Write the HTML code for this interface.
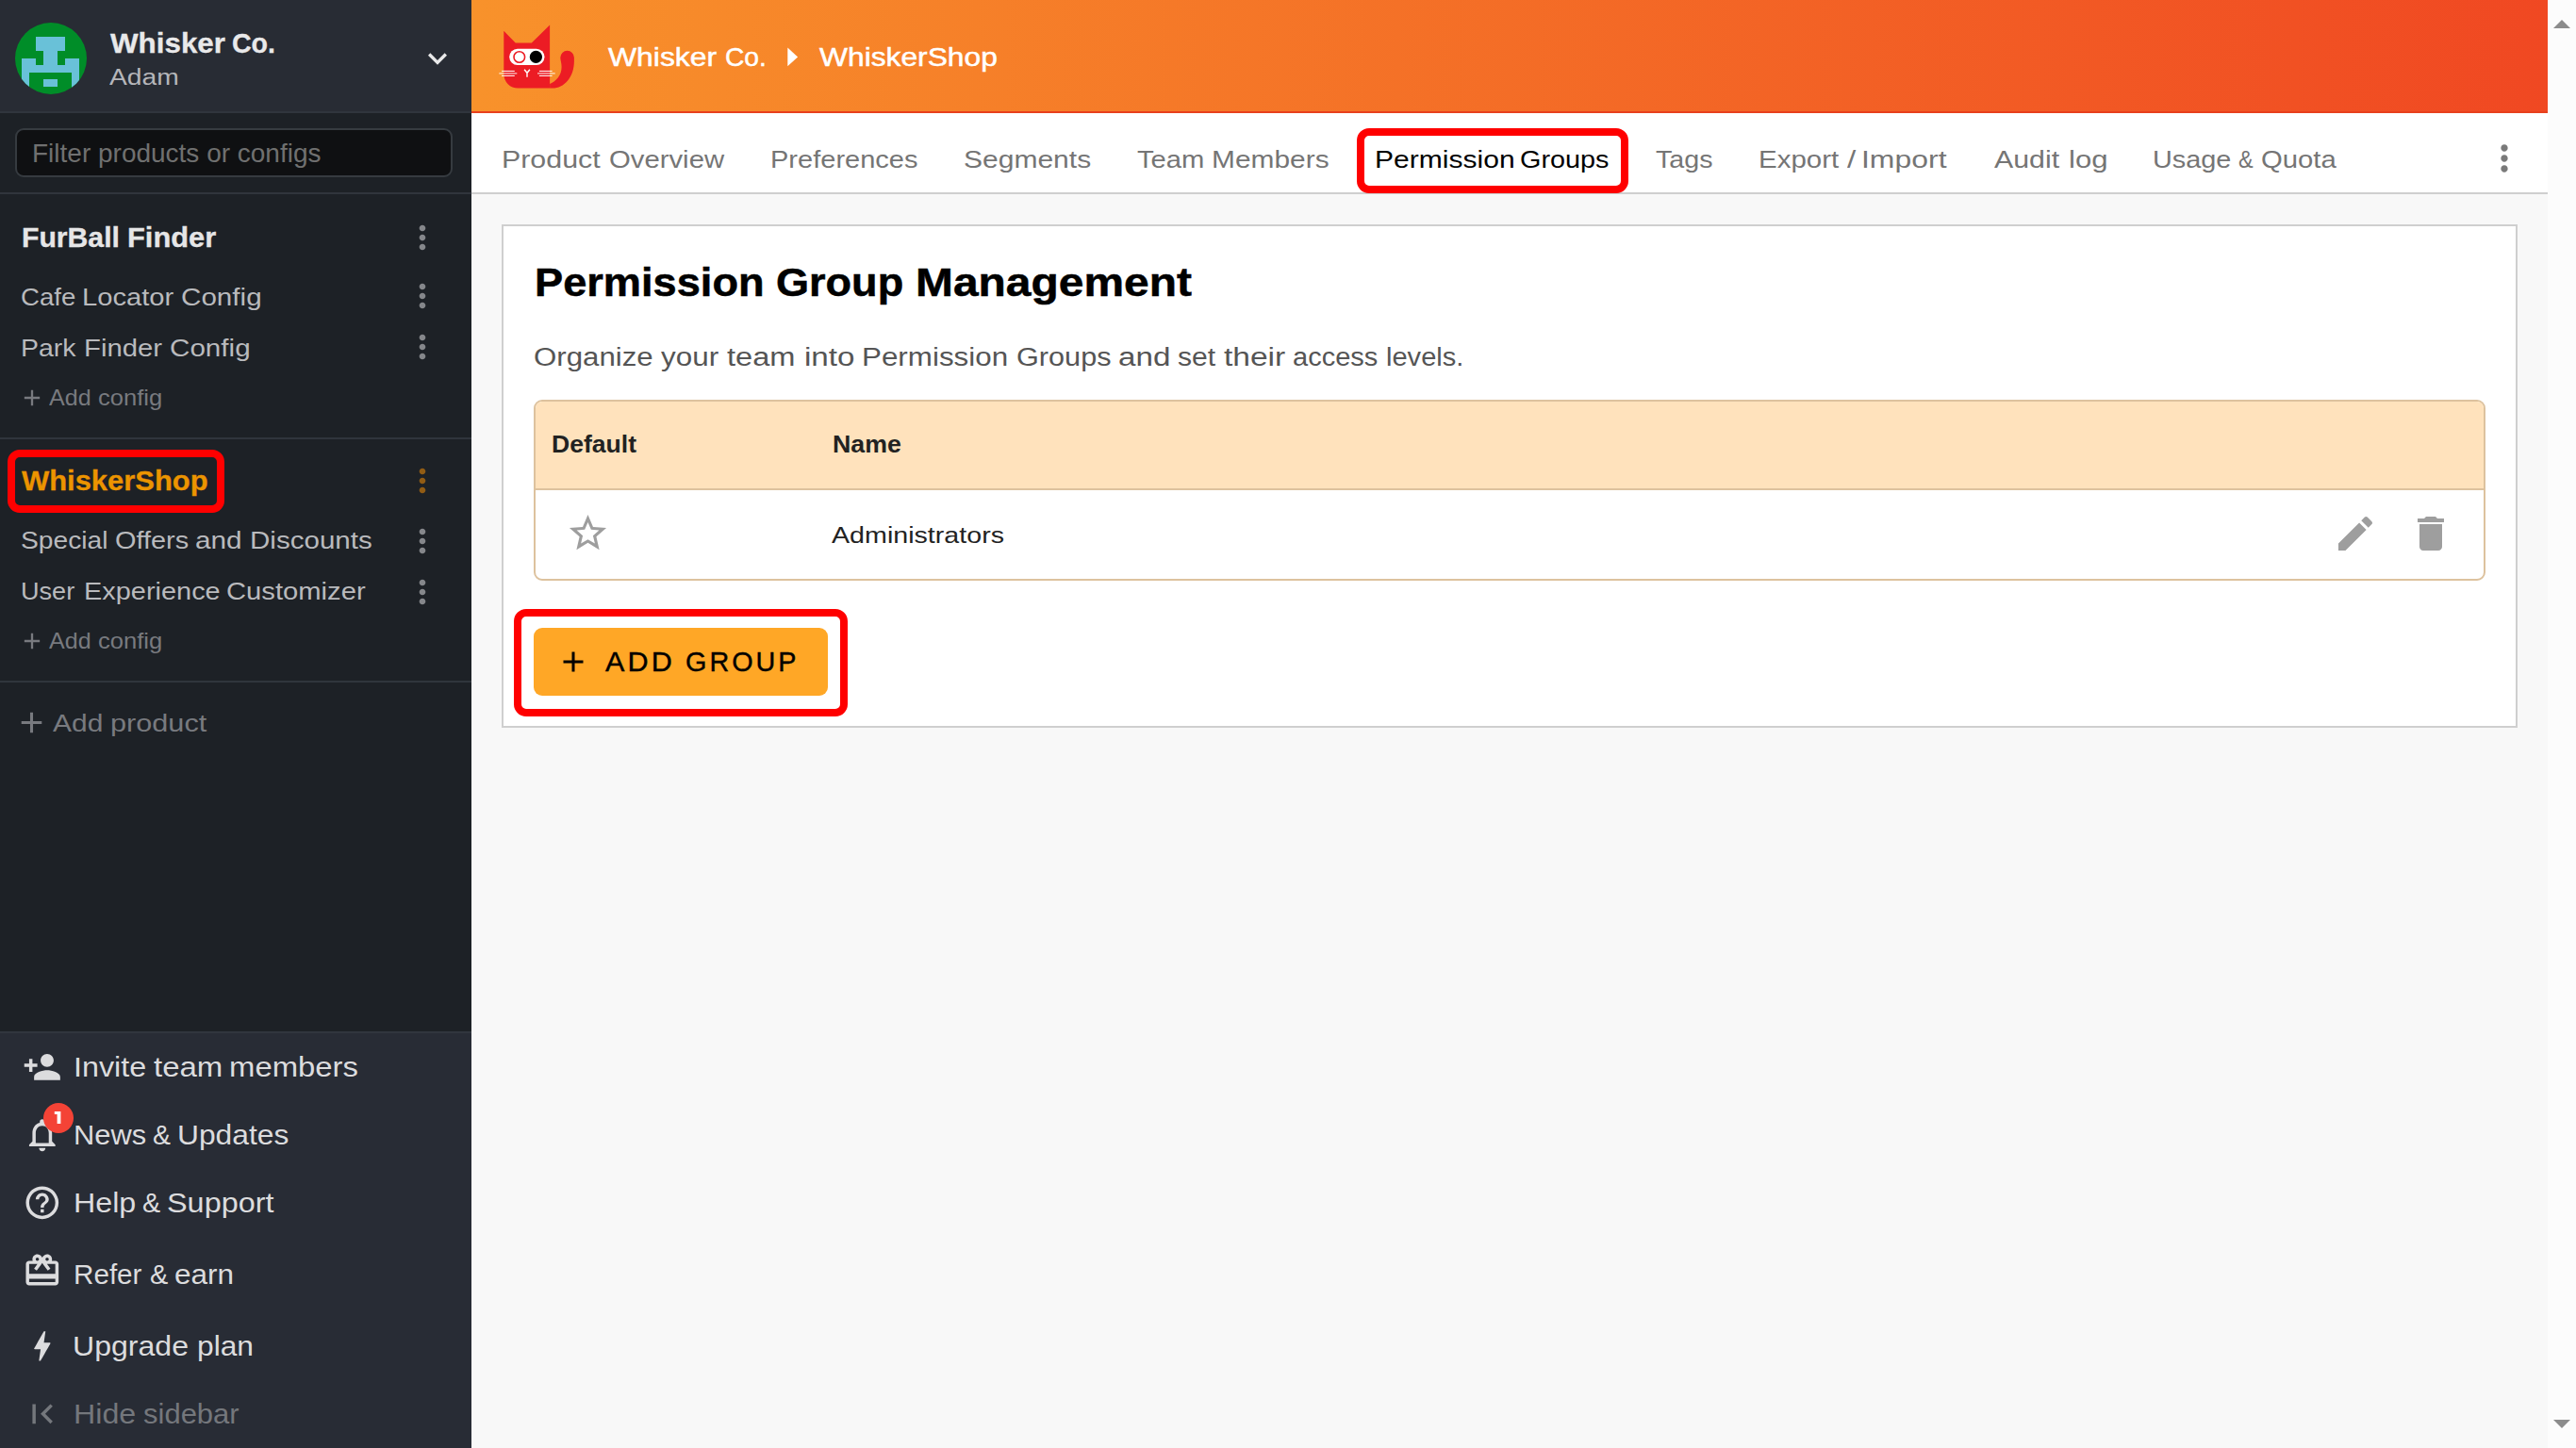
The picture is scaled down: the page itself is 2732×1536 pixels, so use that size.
<!DOCTYPE html>
<html><head><meta charset="utf-8"><title>Permission Groups</title>
<style>
html,body{margin:0;padding:0;}
body{width:2732px;height:1536px;overflow:hidden;position:relative;background:#f8f8f8;font-family:"Liberation Sans",sans-serif;}
.a{position:absolute;box-sizing:content-box;}
aside,header,nav,main,.g{display:block;margin:0;padding:0;height:0;font-size:0;font-weight:normal;}
.t{position:absolute;white-space:pre;line-height:1;transform-origin:0 0;display:block;}
</style></head><body>

<aside>
<div class="a" style="left:0;top:0;width:500px;height:1536px;background:#1d2126"></div>
<div class="a" style="left:0;top:0;width:500px;height:118px;background:#282c34;border-bottom:2px solid #30353d"></div>
<svg class="a" style="left:16px;top:24px" width="76" height="76" viewBox="16 24 76 76">
<defs><clipPath id="avc"><circle cx="54" cy="62" r="38"/></clipPath></defs>
<circle cx="54" cy="62" r="38" fill="#008d28"/>
<g clip-path="url(#avc)" fill="#69c1d8" shape-rendering="crispEdges"><rect x="38" y="39" width="31" height="15"/><rect x="46.3" y="54" width="14.7" height="15"/><rect x="23" y="62" width="15" height="7"/><rect x="69" y="62" width="15" height="7"/><rect x="23" y="69" width="61" height="8"/><rect x="23" y="77" width="8" height="23"/><rect x="76" y="77" width="8" height="23"/><rect x="46.3" y="84" width="14.7" height="8"/></g></svg>
<svg class="a" style="left:444px;top:42px" width="40" height="40" viewBox="0 0 24 24" fill="#e9e9ea"><path d="M16.59 8.59L12 13.17 7.41 8.59 6 10l6 6 6-6z"/></svg>
<div class="a" style="left:16px;top:136px;width:460px;height:48px;border:2px solid #363b40;border-radius:9px;background:#0f1012"></div>
<div class="a" style="left:0;top:204px;width:500px;height:2px;background:#30353c"></div>
<div class="a" style="left:0;top:464px;width:500px;height:2px;background:#30353c"></div>
<div class="a" style="left:0;top:722px;width:500px;height:2px;background:#30353c"></div>
<div class="a" style="left:0;top:1094px;width:500px;height:440px;background:#282c35;border-top:2px solid #31363e"></div>
<svg class="a" style="left:24.15px;top:1111.05px" width="41.6" height="41.6" viewBox="0 0 24 24" fill="#dcdcde"><path d="M15 12c2.210 0 4-1.790 4-4s-1.790-4-4-4-4 1.790-4 4 1.790 4 4 4zm-9-2V7H4v3H1v2h3v3h2v-3h3v-2H6zm9 4c-2.670 0-8 1.340-8 4v2h16v-2c0-2.660-5.330-4-8-4z"/></svg>
<svg class="a" style="left:24.05px;top:1183.00px" width="41.6" height="41.6" viewBox="0 0 24 24" fill="#dcdcde"><path d="M12 22c1.100 0 2-.9 2-2h-4c0 1.100.9 2 2 2zm6-6v-5c0-3.070-1.630-5.640-4.500-6.320V4c0-.830-.670-1.500-1.500-1.500s-1.500.670-1.500 1.500v.680C7.640 5.360 6 7.920 6 11v5l-2 2v1h16v-1l-2-2zm-2 1H8v-6c0-2.480 1.510-4.500 4-4.500s4 2.020 4 4.500v6z"/></svg>
<div class="a" style="left:45.85px;top:1170px;width:32px;height:32px;border-radius:16px;background:#f44336"></div>
<svg class="a" style="left:56px;top:1176px" width="12" height="18" viewBox="56 1176 12 18"><path d="M57.8 1178.9H64.4V1192.1H60.6V1181.9H57.8Z" fill="#fff"/></svg>
<svg class="a" style="left:24.25px;top:1255.15px" width="41.6" height="41.6" viewBox="0 0 24 24" fill="#dcdcde"><path d="M11 18h2v-2h-2v2zm1-16C6.480 2 2 6.480 2 12s4.480 10 10 10 10-4.480 10-10S17.520 2 12 2zm0 18c-4.410 0-8-3.590-8-8s3.590-8 8-8 8 3.590 8 8-3.590 8-8 8zm0-14c-2.210 0-4 1.790-4 4h2c0-1.100.9-2 2-2s2 .9 2 2c0 2-3 1.750-3 5h2c0-2.250 3-2.500 3-5 0-2.210-1.790-4-4-4z"/></svg>
<svg class="a" style="left:24.25px;top:1327.20px" width="41.6" height="41.6" viewBox="0 0 24 24" fill="#dcdcde"><path d="M20 6h-2.180c.110-.310.180-.650.180-1 0-1.660-1.340-3-3-3-1.050 0-1.960.540-2.500 1.350l-.5.670-.5-.680C10.960 2.540 10.050 2 9 2 7.340 2 6 3.340 6 5c0 .350.070.690.180 1H4c-1.110 0-1.990.890-1.990 2L2 19c0 1.110.890 2 2 2h16c1.110 0 2-.890 2-2V8c0-1.110-.890-2-2-2zm-5-2c.550 0 1 .450 1 1s-.450 1-1 1-1-.450-1-1 .450-1 1-1zM9 4c.550 0 1 .450 1 1s-.450 1-1 1-1-.450-1-1 .450-1 1-1zm11 15H4v-2h16v2zm0-5H4V8h5.080L7 10.830 8.620 12 11 8.760l1-1.360 1 1.360L15.380 12 17 10.830 14.920 8H20v6z"/></svg>
<svg class="a" style="left:24.15px;top:1407.30px" width="41.6" height="41.6" viewBox="0 0 24 24" fill="#dcdcde"><path d="M11 21h-1l1-7H7.500c-.580 0-.570-.320-.380-.660.190-.340.050-.080.070-.120C8.480 10.940 10.420 7.540 13 3h1l-1 7h3.500c.490 0 .560.330.470.510l-.070.150C12.960 17.550 11 21 11 21z"/></svg>
<svg class="a" style="left:23.90px;top:1479.45px" width="41.6" height="41.6" viewBox="0 0 24 24" fill="#74777c"><path d="M18.410 16.590L13.820 12l4.590-4.590L17 6l-6 6 6 6zM6 6h2v12H6z"/></svg>

<svg class="a" style="left:428.0px;top:232.0px" width="40" height="40" viewBox="0 0 24 24" fill="#85878b"><path d="M12 8c1.1 0 2-.9 2-2s-.9-2-2-2-2 .9-2 2 .9 2 2 2zm0 2c-1.1 0-2 .9-2 2s.9 2 2 2 2-.9 2-2-.9-2-2-2zm0 6c-1.1 0-2 .9-2 2s.9 2 2 2 2-.9 2-2-.9-2-2-2z"/></svg>
<svg class="a" style="left:428.0px;top:294.3px" width="40" height="40" viewBox="0 0 24 24" fill="#85878b"><path d="M12 8c1.1 0 2-.9 2-2s-.9-2-2-2-2 .9-2 2 .9 2 2 2zm0 2c-1.1 0-2 .9-2 2s.9 2 2 2 2-.9 2-2-.9-2-2-2zm0 6c-1.1 0-2 .9-2 2s.9 2 2 2 2-.9 2-2-.9-2-2-2z"/></svg>
<svg class="a" style="left:428.0px;top:348.0px" width="40" height="40" viewBox="0 0 24 24" fill="#85878b"><path d="M12 8c1.1 0 2-.9 2-2s-.9-2-2-2-2 .9-2 2 .9 2 2 2zm0 2c-1.1 0-2 .9-2 2s.9 2 2 2 2-.9 2-2-.9-2-2-2zm0 6c-1.1 0-2 .9-2 2s.9 2 2 2 2-.9 2-2-.9-2-2-2z"/></svg>
<svg class="a" style="left:428.0px;top:490.0px" width="40" height="40" viewBox="0 0 24 24" fill="#915c14"><path d="M12 8c1.1 0 2-.9 2-2s-.9-2-2-2-2 .9-2 2 .9 2 2 2zm0 2c-1.1 0-2 .9-2 2s.9 2 2 2 2-.9 2-2-.9-2-2-2zm0 6c-1.1 0-2 .9-2 2s.9 2 2 2 2-.9 2-2-.9-2-2-2z"/></svg>
<svg class="a" style="left:428.0px;top:553.7px" width="40" height="40" viewBox="0 0 24 24" fill="#85878b"><path d="M12 8c1.1 0 2-.9 2-2s-.9-2-2-2-2 .9-2 2 .9 2 2 2zm0 2c-1.1 0-2 .9-2 2s.9 2 2 2 2-.9 2-2-.9-2-2-2zm0 6c-1.1 0-2 .9-2 2s.9 2 2 2 2-.9 2-2-.9-2-2-2z"/></svg>
<svg class="a" style="left:428.0px;top:608.0px" width="40" height="40" viewBox="0 0 24 24" fill="#85878b"><path d="M12 8c1.1 0 2-.9 2-2s-.9-2-2-2-2 .9-2 2 .9 2 2 2zm0 2c-1.1 0-2 .9-2 2s.9 2 2 2 2-.9 2-2-.9-2-2-2zm0 6c-1.1 0-2 .9-2 2s.9 2 2 2 2-.9 2-2-.9-2-2-2z"/></svg>
<svg class="a" style="left:19.9px;top:408.1px" width="28" height="28" viewBox="0 0 24 24" fill="#787a7f"><path d="M19 13h-6v6h-2v-6H5v-2h6V5h2v6h6v2z"/></svg>
<svg class="a" style="left:19.9px;top:666.1px" width="28" height="28" viewBox="0 0 24 24" fill="#787a7f"><path d="M19 13h-6v6h-2v-6H5v-2h6V5h2v6h6v2z"/></svg>
<svg class="a" style="left:15.450000000000003px;top:747.5px" width="37" height="37" viewBox="0 0 24 24" fill="#787a7f"><path d="M19 13h-6v6h-2v-6H5v-2h6V5h2v6h6v2z"/></svg>
<div class="a" style="left:8px;top:477px;width:214px;height:51px;border:8px solid #ff0000;border-radius:13px"></div>
<div class="g"><span class="t" style="left:116.50px;top:31.30px;font-size:29.4px;color:#e9e9ea;transform:scaleX(1.0668);font-weight:bold;-webkit-text-stroke:0.3px #e9e9ea;">Whisker</span> <span class="t" style="left:246.33px;top:31.30px;font-size:29.4px;color:#e9e9ea;transform:scaleX(0.9717);font-weight:bold;-webkit-text-stroke:0.3px #e9e9ea;">Co.</span></div>
<div class="g"><span class="t" style="left:116.10px;top:70.30px;font-size:24.7px;color:#b5b6ba;transform:scaleX(1.1442);">Adam</span></div>
<div class="g"><span class="t" style="left:22.97px;top:237.30px;font-size:29.3px;color:#e6e6e7;transform:scaleX(1.0295);font-weight:bold;-webkit-text-stroke:0.3px #e6e6e7;">FurBall</span> <span class="t" style="left:135.15px;top:237.30px;font-size:29.3px;color:#e6e6e7;transform:scaleX(1.0531);font-weight:bold;-webkit-text-stroke:0.3px #e6e6e7;">Finder</span></div>
<div class="g"><span class="t" style="left:22.26px;top:302.30px;font-size:26.5px;color:#b9babd;transform:scaleX(1.0417);">Cafe</span> <span class="t" style="left:87.20px;top:302.30px;font-size:26.5px;color:#b9babd;transform:scaleX(1.1009);">Locator</span> <span class="t" style="left:191.78px;top:302.30px;font-size:26.5px;color:#b9babd;transform:scaleX(1.1180);">Config</span></div>
<div class="g"><span class="t" style="left:22.25px;top:356.30px;font-size:26.5px;color:#b9babd;transform:scaleX(1.0725);">Park</span> <span class="t" style="left:89.09px;top:356.30px;font-size:26.5px;color:#b9babd;transform:scaleX(1.1052);">Finder</span> <span class="t" style="left:179.78px;top:356.30px;font-size:26.5px;color:#b9babd;transform:scaleX(1.1180);">Config</span></div>
<div class="g"><span class="t" style="left:52.10px;top:411.30px;font-size:23.2px;color:#787a7f;transform:scaleX(1.0802);">Add</span> <span class="t" style="left:103.90px;top:411.30px;font-size:23.2px;color:#787a7f;transform:scaleX(1.1037);">config</span></div>
<div class="g"><span class="t" style="left:23.30px;top:495.30px;font-size:29.3px;color:#ec9400;transform:scaleX(1.0553);font-weight:bold;-webkit-text-stroke:0.3px #ec9400;">WhiskerShop</span></div>
<div class="g"><span class="t" style="left:22.14px;top:560.30px;font-size:26.5px;color:#b9babd;transform:scaleX(1.0644);">Special</span> <span class="t" style="left:121.91px;top:560.30px;font-size:26.5px;color:#b9babd;transform:scaleX(1.0906);">Offers</span> <span class="t" style="left:207.28px;top:560.30px;font-size:26.5px;color:#b9babd;transform:scaleX(1.1230);">and</span> <span class="t" style="left:264.77px;top:560.30px;font-size:26.5px;color:#b9babd;transform:scaleX(1.1157);">Discounts</span></div>
<div class="g"><span class="t" style="left:22.26px;top:614.30px;font-size:26.5px;color:#b9babd;transform:scaleX(1.0217);">User</span> <span class="t" style="left:88.52px;top:614.30px;font-size:26.5px;color:#b9babd;transform:scaleX(1.0913);">Experience</span> <span class="t" style="left:239.80px;top:614.30px;font-size:26.5px;color:#b9babd;transform:scaleX(1.1015);">Customizer</span></div>
<div class="g"><span class="t" style="left:52.10px;top:669.30px;font-size:23.2px;color:#787a7f;transform:scaleX(1.0802);">Add</span> <span class="t" style="left:103.90px;top:669.30px;font-size:23.2px;color:#787a7f;transform:scaleX(1.1037);">config</span></div>
<div class="g"><span class="t" style="left:55.80px;top:754.30px;font-size:26.5px;color:#787a7f;transform:scaleX(1.1311);">Add</span> <span class="t" style="left:117.14px;top:754.30px;font-size:26.5px;color:#787a7f;transform:scaleX(1.1565);">product</span></div>
<div class="g"><span class="t" style="left:77.64px;top:1118.30px;font-size:28.6px;color:#dcdcde;transform:scaleX(1.1293);">Invite</span> <span class="t" style="left:162.90px;top:1118.30px;font-size:28.6px;color:#dcdcde;transform:scaleX(1.1531);">team</span> <span class="t" style="left:243.25px;top:1118.30px;font-size:28.6px;color:#dcdcde;transform:scaleX(1.1496);">members</span></div>
<div class="g"><span class="t" style="left:77.74px;top:1190.30px;font-size:28.6px;color:#dcdcde;transform:scaleX(1.0795);">News</span> <span class="t" style="left:162.21px;top:1190.30px;font-size:28.6px;color:#dcdcde;transform:scaleX(0.9944);">&amp;</span> <span class="t" style="left:187.98px;top:1190.30px;font-size:28.6px;color:#dcdcde;transform:scaleX(1.1113);">Updates</span></div>
<div class="g"><span class="t" style="left:77.65px;top:1262.30px;font-size:28.6px;color:#dcdcde;transform:scaleX(1.1269);">Help</span> <span class="t" style="left:150.59px;top:1262.30px;font-size:28.6px;color:#dcdcde;transform:scaleX(1.0056);">&amp;</span> <span class="t" style="left:177.27px;top:1262.30px;font-size:28.6px;color:#dcdcde;transform:scaleX(1.1330);">Support</span></div>
<div class="g"><span class="t" style="left:77.83px;top:1338.30px;font-size:28.6px;color:#dcdcde;transform:scaleX(1.0366);">Refer</span> <span class="t" style="left:158.89px;top:1338.30px;font-size:28.6px;color:#dcdcde;transform:scaleX(1.0111);">&amp;</span> <span class="t" style="left:184.80px;top:1338.30px;font-size:28.6px;color:#dcdcde;transform:scaleX(1.1025);">earn</span></div>
<div class="g"><span class="t" style="left:77.36px;top:1414.30px;font-size:28.6px;color:#dcdcde;transform:scaleX(1.1210);">Upgrade</span> <span class="t" style="left:209.09px;top:1414.30px;font-size:28.6px;color:#dcdcde;transform:scaleX(1.1101);">plan</span></div>
<div class="g"><span class="t" style="left:77.65px;top:1486.30px;font-size:28.6px;color:#74777c;transform:scaleX(1.1269);">Hide</span> <span class="t" style="left:151.60px;top:1486.30px;font-size:28.6px;color:#74777c;transform:scaleX(1.0842);">sidebar</span></div>
<div class="g"><span class="t" style="left:34.00px;top:149.30px;font-size:28px;color:#707070;transform:scaleX(0.9998);">Filter products or configs</span></div>
</aside>
<header>
<div class="a" style="left:500px;top:0;width:2202px;height:118px;background:linear-gradient(90deg,#f8922b 0%,#f04822 100%);border-bottom:2px solid #e8401d"></div>
<svg class="a" style="left:835px;top:50px" width="12" height="21" viewBox="0 0 12 21"><path d="M0.3 0.6L11.1 10.4 0.3 20.2z" fill="#fff"/></svg>
<svg class="a" style="left:520px;top:15px" width="100" height="90" viewBox="520 15 100 90">
<path d="M583.1 93.6L586 93.6C598 93.6 608.9 82 608.9 65L608.9 61.1A7.3 7.3 0 0 0 594.3 61.1C594.3 64 595.6 67 595.6 71C595.6 80 590 86 583.1 89Z" fill="#ec1c24"/>
<path d="M534.3 32.7L546.7 45.5L563.8 45.5L583.1 26.4L583.1 93.6L549.3 93.6A15 15 0 0 1 534.3 78.6Z" fill="#ec1c24"/>
<rect x="540.2" y="51.7" width="37.3" height="17.3" rx="8.65" fill="#fff"/>
<circle cx="550.8" cy="60.5" r="5.8" fill="#fff" stroke="#ec1c24" stroke-width="1.6"/>
<circle cx="568.4" cy="60.4" r="6.6" fill="#000"/>
<path d="M556.1 73.7L559 77.3L561.9 73.7M559 77.3L559 81.8" fill="none" stroke="#fff" stroke-width="1.4"/>
<g stroke="#fff" stroke-width="1" fill="none"><path d="M532.1 75.4H545.8M532.1 80.4H545.8M571.9 75.4H585.6M571.9 80.4H585.6"/><path d="M529.3 77.9H548.3M570 77.9H588.7" stroke-opacity=".75" stroke-width="1.4"/></g>
</svg>

<div class="g"><span class="t" style="left:644.50px;top:46.30px;font-size:28.5px;color:#fff;transform:scaleX(1.1186);-webkit-text-stroke:0.5px #fff;">Whisker</span> <span class="t" style="left:768.81px;top:46.30px;font-size:28.5px;color:#fff;transform:scaleX(0.9896);-webkit-text-stroke:0.5px #fff;">Co.</span></div>
<div class="g"><span class="t" style="left:869.30px;top:46.30px;font-size:28.5px;color:#fff;transform:scaleX(1.1143);-webkit-text-stroke:0.5px #fff;">WhiskerShop</span></div>
</header>
<nav>
<div class="a" style="left:500px;top:120px;width:2202px;height:84px;background:#fff;border-bottom:2px solid #cfcfcf"></div>

<svg class="a" style="left:2634.0px;top:145.9px" width="44" height="44" viewBox="0 0 24 24" fill="#7a7a7a"><path d="M12 8c1.1 0 2-.9 2-2s-.9-2-2-2-2 .9-2 2 .9 2 2 2zm0 2c-1.1 0-2 .9-2 2s.9 2 2 2 2-.9 2-2-.9-2-2-2zm0 6c-1.1 0-2 .9-2 2s.9 2 2 2 2-.9 2-2-.9-2-2-2z"/></svg>
<div class="a" style="left:1439px;top:136px;width:272px;height:53px;border:8px solid #ff0000;border-radius:13px"></div>
<div class="g"><span class="t" style="left:532.00px;top:156.30px;font-size:26.4px;color:#757575;transform:scaleX(1.1504);">Product</span> <span class="t" style="left:645.59px;top:156.30px;font-size:26.4px;color:#757575;transform:scaleX(1.1099);">Overview</span></div>
<div class="g"><span class="t" style="left:816.80px;top:156.30px;font-size:26.4px;color:#757575;transform:scaleX(1.1000);">Preferences</span></div>
<div class="g"><span class="t" style="left:1021.56px;top:156.30px;font-size:26.4px;color:#757575;transform:scaleX(1.1375);">Segments</span></div>
<div class="g"><span class="t" style="left:1205.50px;top:156.30px;font-size:26.4px;color:#757575;transform:scaleX(1.1062);">Team</span> <span class="t" style="left:1284.63px;top:156.30px;font-size:26.4px;color:#757575;transform:scaleX(1.1328);">Members</span></div>
<div class="g"><span class="t" style="left:1457.52px;top:156.30px;font-size:26.4px;color:#000;transform:scaleX(1.1384);">Permission</span> <span class="t" style="left:1612.41px;top:156.30px;font-size:26.4px;color:#000;transform:scaleX(1.0920);">Groups</span></div>
<div class="g"><span class="t" style="left:1755.70px;top:156.30px;font-size:26.4px;color:#757575;transform:scaleX(1.0873);">Tags</span></div>
<div class="g"><span class="t" style="left:1864.76px;top:156.30px;font-size:26.4px;color:#757575;transform:scaleX(1.1182);">Export</span> <span class="t" style="left:1958.80px;top:156.30px;font-size:26.4px;color:#757575;transform:scaleX(1.2625);">/</span> <span class="t" style="left:1974.48px;top:156.30px;font-size:26.4px;color:#757575;transform:scaleX(1.2102);">Import</span></div>
<div class="g"><span class="t" style="left:2114.90px;top:156.30px;font-size:26.4px;color:#757575;transform:scaleX(1.1493);">Audit</span> <span class="t" style="left:2194.22px;top:156.30px;font-size:26.4px;color:#757575;transform:scaleX(1.1801);">log</span></div>
<div class="g"><span class="t" style="left:2282.81px;top:156.30px;font-size:26.4px;color:#757575;transform:scaleX(1.0936);">Usage</span> <span class="t" style="left:2374.30px;top:156.30px;font-size:26.4px;color:#757575;transform:scaleX(0.8889);">&amp;</span> <span class="t" style="left:2398.49px;top:156.30px;font-size:26.4px;color:#757575;transform:scaleX(1.1093);">Quota</span></div>
</nav>
<main>
<div class="a" style="left:532px;top:238px;width:2134px;height:530px;background:#fff;border:2px solid #cfcfcf"></div>
<div class="a" style="left:566px;top:424px;width:2066px;height:188px;border:2px solid #ddc29e;border-radius:9px;background:#fff;overflow:hidden">
<div style="height:92px;background:#ffe2bc;border-bottom:2px solid #ddc29e"></div></div>
<svg class="a" style="left:600.4px;top:542.4px" width="47" height="47" viewBox="0 0 24 24" fill="#9e9e9e"><path d="M22 9.24l-7.19-.62L12 2 9.19 8.63 2 9.24l5.46 4.73L5.82 21 12 17.27 18.18 21l-1.63-7.03L22 9.24zM12 15.4l-3.76 2.27 1-4.28-3.32-2.88 4.38-.38L12 6.1l1.71 4.04 4.38.38-3.32 2.88 1 4.28L12 15.4z"/></svg>
<svg class="a" style="left:2473.5px;top:542px" width="48" height="48" viewBox="0 0 24 24" fill="#9e9e9e"><path d="M3 17.25V21h3.75L17.81 9.94l-3.75-3.75L3 17.25zM20.71 7.04c.39-.39.39-1.02 0-1.41l-2.34-2.34c-.39-.39-1.02-.39-1.41 0l-1.83 1.83 3.75 3.75 1.83-1.83z"/></svg>
<svg class="a" style="left:2554px;top:542px" width="48" height="48" viewBox="0 0 24 24" fill="#9e9e9e"><path d="M6 19c0 1.1.9 2 2 2h8c1.1 0 2-.9 2-2V7H6v12zM19 4h-3.500l-1-1h-5l-1 1H5v2h14V4z"/></svg>
<div class="a" style="left:566px;top:666px;width:312px;height:72px;background:#ffa726;border-radius:9px"></div>
<svg class="a" style="left:590px;top:684px" width="36" height="36" viewBox="0 0 24 24" fill="#000"><path d="M19 13h-6v6h-2v-6H5v-2h6V5h2v6h6v2z"/></svg>

<div class="a" style="left:545px;top:646px;width:338px;height:98px;border:8px solid #ff0000;border-radius:13px"></div>
<h1 class="g"><span class="t" style="left:566.76px;top:279.30px;font-size:42.3px;color:#000;transform:scaleX(1.0683);font-weight:bold;-webkit-text-stroke:0.5px #000;">Permission</span> <span class="t" style="left:823.13px;top:279.30px;font-size:42.3px;color:#000;transform:scaleX(1.0653);font-weight:bold;-webkit-text-stroke:0.5px #000;">Group</span> <span class="t" style="left:971.43px;top:279.30px;font-size:42.3px;color:#000;transform:scaleX(1.1328);font-weight:bold;-webkit-text-stroke:0.5px #000;">Management</span></h1>
<p class="g"><span class="t" style="left:566.30px;top:364.30px;font-size:28.4px;color:#555;transform:scaleX(1.0996);">Organize</span> <span class="t" style="left:701.40px;top:364.30px;font-size:28.4px;color:#555;transform:scaleX(1.1064);">your</span> <span class="t" style="left:771.30px;top:364.30px;font-size:28.4px;color:#555;transform:scaleX(1.1486);">team</span> <span class="t" style="left:852.83px;top:364.30px;font-size:28.4px;color:#555;transform:scaleX(1.1686);">into</span> <span class="t" style="left:914.39px;top:364.30px;font-size:28.4px;color:#555;transform:scaleX(1.1045);">Permission</span> <span class="t" style="left:1077.62px;top:364.30px;font-size:28.4px;color:#555;transform:scaleX(1.0794);">Groups</span> <span class="t" style="left:1185.83px;top:364.30px;font-size:28.4px;color:#555;transform:scaleX(1.1687);">and</span> <span class="t" style="left:1248.70px;top:364.30px;font-size:28.4px;color:#555;transform:scaleX(1.0583);">set</span> <span class="t" style="left:1297.60px;top:364.30px;font-size:28.4px;color:#555;transform:scaleX(1.1812);">their</span> <span class="t" style="left:1370.88px;top:364.30px;font-size:28.4px;color:#555;transform:scaleX(1.0222);">access</span> <span class="t" style="left:1470.48px;top:364.30px;font-size:28.4px;color:#555;transform:scaleX(1.0234);">levels.</span></p>
<div class="g"><span class="t" style="left:584.54px;top:459.30px;font-size:25px;color:#222;transform:scaleX(1.0627);font-weight:bold;">Default</span></div>
<div class="g"><span class="t" style="left:882.83px;top:459.30px;font-size:25px;color:#222;transform:scaleX(1.0701);font-weight:bold;">Name</span></div>
<div class="g"><span class="t" style="left:882.40px;top:556.30px;font-size:24.4px;color:#222;transform:scaleX(1.1742);">Administrators</span></div>
<div class="g"><span class="t" style="left:642.40px;top:688.30px;font-size:28.8px;color:#000;transform:scaleX(1.0606);letter-spacing:3px;-webkit-text-stroke:0.4px #000;">ADD</span> <span class="t" style="left:726.80px;top:688.30px;font-size:28.8px;color:#000;transform:scaleX(0.9992);letter-spacing:3px;-webkit-text-stroke:0.4px #000;">GROUP</span></div>
</main>
<div>
<div class="a" style="left:2702px;top:0;width:30px;height:1536px;background:#fcfcfc"></div>
<svg class="a" style="left:2707px;top:20px" width="20" height="11" viewBox="0 0 20 11"><path d="M1 10L10 1 19 10z" fill="#8c8c8c"/></svg>
<svg class="a" style="left:2707px;top:1505px" width="20" height="11" viewBox="0 0 20 11"><path d="M1 1L10 10 19 1z" fill="#8c8c8c"/></svg>

</div>
</body></html>
